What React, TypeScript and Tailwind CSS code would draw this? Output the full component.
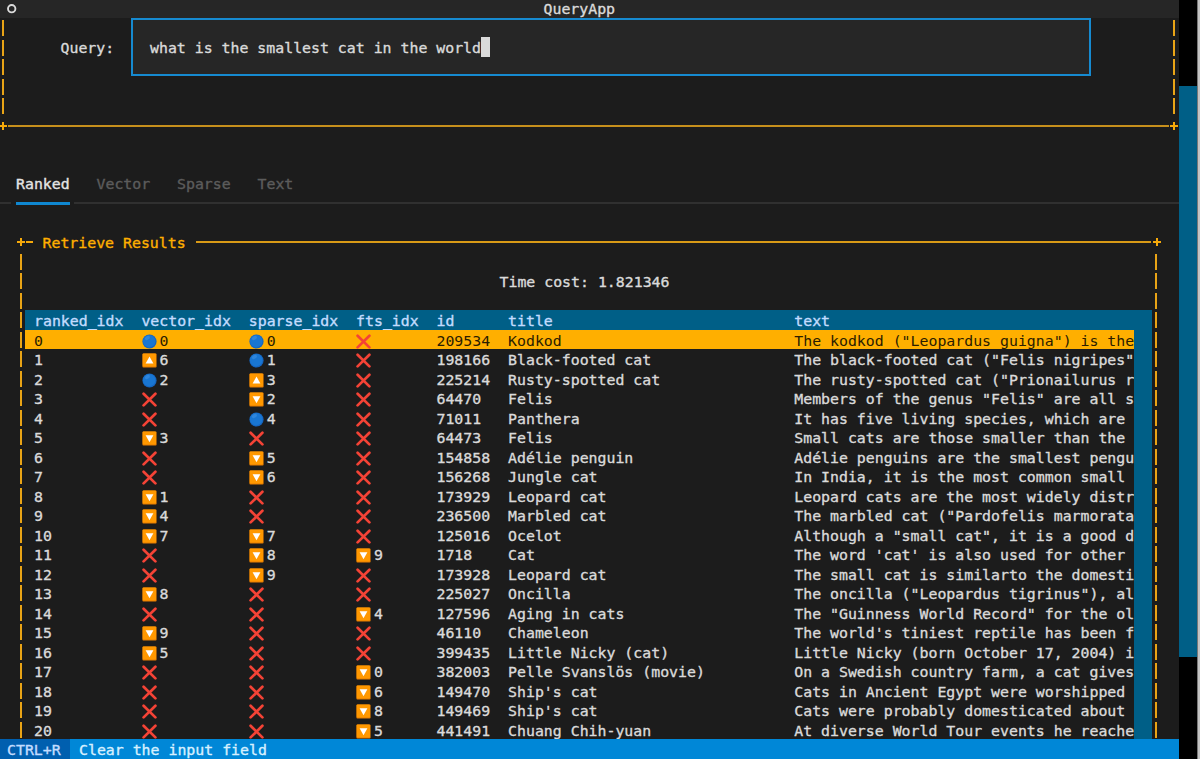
import React from "react";

type Mark = "circle" | "up" | "down" | "cross";

interface ResultRow {
  vector: string;
  sparse: string;
  fts: string;
  id: string;
  title: string;
  text: string;
}

// Rank changes: "=" same, "^" up, "v" down, "x" missing
const marks: Record<string, Mark> = {
  "=": "circle",
  "^": "up",
  v: "down",
  x: "cross",
};

const row = (
  vector: string,
  sparse: string,
  fts: string,
  id: string,
  title: string,
  text: string
): ResultRow => ({ vector, sparse, fts, id, title, text });

const rows: ResultRow[] = [
  row("=0", "=0", "x", "209534", "Kodkod", 'The kodkod ("Leopardus guigna") is the'),
  row("^6", "=1", "x", "198166", "Black-footed cat", 'The black-footed cat ("Felis nigripes"'),
  row("=2", "^3", "x", "225214", "Rusty-spotted cat", 'The rusty-spotted cat ("Prionailurus r'),
  row("x", "v2", "x", "64470", "Felis", 'Members of the genus "Felis" are all s'),
  row("x", "=4", "x", "71011", "Panthera", "It has five living species, which are"),
  row("v3", "x", "x", "64473", "Felis", "Small cats are those smaller than the"),
  row("x", "v5", "x", "154858", "Adélie penguin", "Adélie penguins are the smallest pengu"),
  row("x", "v6", "x", "156268", "Jungle cat", "In India, it is the most common small"),
  row("v1", "x", "x", "173929", "Leopard cat", "Leopard cats are the most widely distr"),
  row("v4", "x", "x", "236500", "Marbled cat", 'The marbled cat ("Pardofelis marmorata'),
  row("v7", "v7", "x", "125016", "Ocelot", 'Although a "small cat", it is a good d'),
  row("x", "v8", "v9", "1718", "Cat", "The word 'cat' is also used for other"),
  row("x", "v9", "x", "173928", "Leopard cat", "The small cat is similarto the domesti"),
  row("v8", "x", "x", "225027", "Oncilla", 'The oncilla ("Leopardus tigrinus"), al'),
  row("x", "x", "v4", "127596", "Aging in cats", 'The "Guinness World Record" for the ol'),
  row("v9", "x", "x", "46110", "Chameleon", "The world's tiniest reptile has been f"),
  row("v5", "x", "x", "399435", "Little Nicky (cat)", "Little Nicky (born October 17, 2004) i"),
  row("x", "x", "v0", "382003", "Pelle Svanslös (movie)", "On a Swedish country farm, a cat gives"),
  row("x", "x", "v6", "149470", "Ship's cat", "Cats in Ancient Egypt were worshipped"),
  row("x", "x", "v8", "149469", "Ship's cat", "Cats were probably domesticated about"),
  row("x", "x", "v5", "441491", "Chuang Chih-yuan", "At diverse World Tour events he reache"),
];

const columns = ["ranked_idx", "vector_idx", "sparse_idx", "fts_idx", "id", "title", "text"];

const gridCols =
  "grid grid-cols-[107.4px_107.4px_107.3px_80.4px_71.6px_286.2px_1fr] h-[19.5px] pl-[9px] whitespace-pre leading-[22px]";

const MarkIcon: React.FC<{ type: Mark }> = ({ type }) => (
  <svg viewBox="0 0 15 15" className="w-[15px] h-[15px] mt-[4px] ml-[0.4px] mr-[2.6px] shrink-0">
    {type === "circle" && (
      <>
        <circle cx="7.5" cy="7.5" r="7.1" fill="#1565c0" />
        <circle cx="7.2" cy="7.2" r="6.2" fill="#1976d2" />
        <ellipse cx="5.4" cy="4" rx="2.7" ry="1.8" fill="#2f86dc" transform="rotate(-30 5.4 4)" />
      </>
    )}
    {(type === "up" || type === "down") && (
      <>
        <rect x="0.4" y="0.6" width="14.2" height="13.8" rx="1" fill="#e67c00" />
        <rect x="0.7" y="0.6" width="13.3" height="13" rx="1" fill="#ff9800" />
        <path d={type === "up" ? "M7.5 3.6 11.4 10.6H3.6Z" : "M7.5 11.2 3.6 4.2H11.4Z"} fill="#fff" />
      </>
    )}
    {type === "cross" && (
      <path d="M1.6 1.8 13.4 13.4M13.4 1.8 1.6 13.4" stroke="#f44336" strokeWidth="2.7" strokeLinecap="round" />
    )}
  </svg>
);

const MarkCell: React.FC<{ value: string }> = ({ value }) => (
  <div className="flex">
    <MarkIcon type={marks[value[0]]} />
    <span>{value.slice(1)}</span>
  </div>
);

// Vertical ascii border, one bar per terminal row
const Rail: React.FC<{ count: number }> = ({ count }) => (
  <div className="w-[2px] shrink-0">
    {Array.from({ length: count }, (_, i) => (
      <div key={i} className="h-[19.5px] pt-[2.4px]">
        <div className="h-[16px] bg-[#e9a416]" />
      </div>
    ))}
  </div>
);

const Plus: React.FC = () => (
  <svg viewBox="0 0 8 8" className="w-[8px] h-[8px] shrink-0">
    <path d="M4 0V8M0 4H8" stroke="#f5a90a" strokeWidth="2" />
  </svg>
);

const App: React.FC = () => {
  return (
    <div className="flex w-[1200px] h-[759px] overflow-hidden bg-black font-['DejaVu_Sans_Mono',monospace] text-[14.86px] leading-[19.5px] text-[#dadada] [-webkit-text-stroke:0.35px]">
      <div className="flex flex-col w-[1179px] h-full bg-[#1c1c1c] shrink-0">
        {/* Title bar */}
        <div className="flex h-[18px] bg-[#262626] shrink-0">
          <div className="w-[543.5px] pl-[7px] pt-[4px]">
            <svg viewBox="0 0 10 10" className="w-[10px] h-[10px]">
              <circle cx="4.7" cy="4.7" r="3.7" fill="none" stroke="#dadada" strokeWidth="1.9" />
            </svg>
          </div>
          <span>QueryApp</span>
        </div>

        {/* Query panel */}
        <div className="flex h-[97.5px] pl-[2px] pr-[4px] shrink-0">
          <Rail count={5} />
          <div className="flex flex-1 pl-[56.5px]">
            <span className="w-[70.5px] pt-[20.6px]">Query:</span>
            <div className="flex w-[960px] h-[58px] border-2 border-[#168ad0] bg-[#262626] pl-[17px] pt-[17px]">
              <span className="whitespace-pre pt-[1.6px]">what is the smallest cat in the world</span>
              <div className="w-[9px] h-[20px] bg-[#dadada]" />
            </div>
          </div>
          <Rail count={5} />
        </div>
        <div className="flex items-center h-[20px] -ml-[1px] shrink-0">
          <Plus />
          <div className="ml-[1px] mr-px flex-1 h-[2px] bg-[#c68f1c]" />
          <Plus />
          <div className="w-px" />
        </div>

        {/* Tabs */}
        <div className="flex mt-[39px] pl-[16px] h-[28px] text-[#5c5c5c] shrink-0">
          <span className="w-[80.5px] text-[#e4e4e4]">Ranked</span>
          <span className="w-[80.5px]">Vector</span>
          <span className="w-[80.5px]">Sparse</span>
          <span>Text</span>
        </div>
        <div className="flex h-[3px] -mt-px items-center shrink-0">
          <div className="w-[11px] h-[2px] bg-[#303030]" />
          <div className="ml-[5px] w-[54px] h-[3px] bg-[#0f87d0]" />
          <div className="ml-[4px] flex-1 h-[2px] bg-[#303030]" />
        </div>

        {/* Results panel */}
        <div className="flex items-center mt-[27.5px] h-[19.5px] pl-[16.5px] pr-[18.5px] text-[#ffaf00] shrink-0">
          <Plus />
          <div className="ml-[1.5px] w-[7px] h-[2px] bg-[#f5a90a]" />
          <span className="ml-[9.5px] w-[153px] shrink-0 whitespace-pre pt-[3.5px]">Retrieve Results</span>
          <div className="mr-[2px] flex-1 h-[2px] bg-[#d99a16]" />
          <Plus />
        </div>
        <div className="flex h-[487.5px] pl-[20px] pr-[22px] shrink-0 overflow-hidden">
          <Rail count={25} />
          <div className="ml-[3px] mr-[3px] w-[1127px]">
            <div className="h-[58.5px] pt-[21px] pl-[474.5px]">Time cost: 1.821346</div>
            <div className={`${gridCols} bg-[#005f87] text-[#c3dcff]`}>
              {columns.map((name) => (
                <span key={name}>{name}</span>
              ))}
            </div>
            <div className="flex bg-[#005f87]">
              <div className="w-[1109px] bg-[#1c1c1c]">
                {rows.map((item, index) => (
                  <div
                    key={item.id}
                    className={`${gridCols} ${index === 0 ? "bg-[#ffaf00] text-[#2b1d00] [-webkit-text-stroke:0px]" : ""}`}
                  >
                    <span>{index}</span>
                    <MarkCell value={item.vector} />
                    <MarkCell value={item.sparse} />
                    <MarkCell value={item.fts} />
                    <span>{item.id}</span>
                    <span>{item.title}</span>
                    <span className="overflow-hidden">{item.text}</span>
                  </div>
                ))}
              </div>
            </div>
          </div>
          <Rail count={25} />
        </div>

        {/* Footer */}
        <div className="flex h-[20px] bg-[#0087d7] text-[#d7f0ff] leading-[22px] shrink-0">
          <span className="w-[70px] h-[20px] pl-[7px] bg-[#005faf] text-[#c3dcff]">CTRL+R</span>
          <span className="pl-[9px]">Clear the input field</span>
        </div>
      </div>

      {/* Page scrollbar */}
      <div className="w-[17.5px] pt-[86px] shrink-0">
        <div className="h-[571px] bg-[#005f87]" />
      </div>
      <div className="flex-1 bg-[#c4c4c4] border-l border-[#777777]" />
    </div>
  );
};

export default App;
